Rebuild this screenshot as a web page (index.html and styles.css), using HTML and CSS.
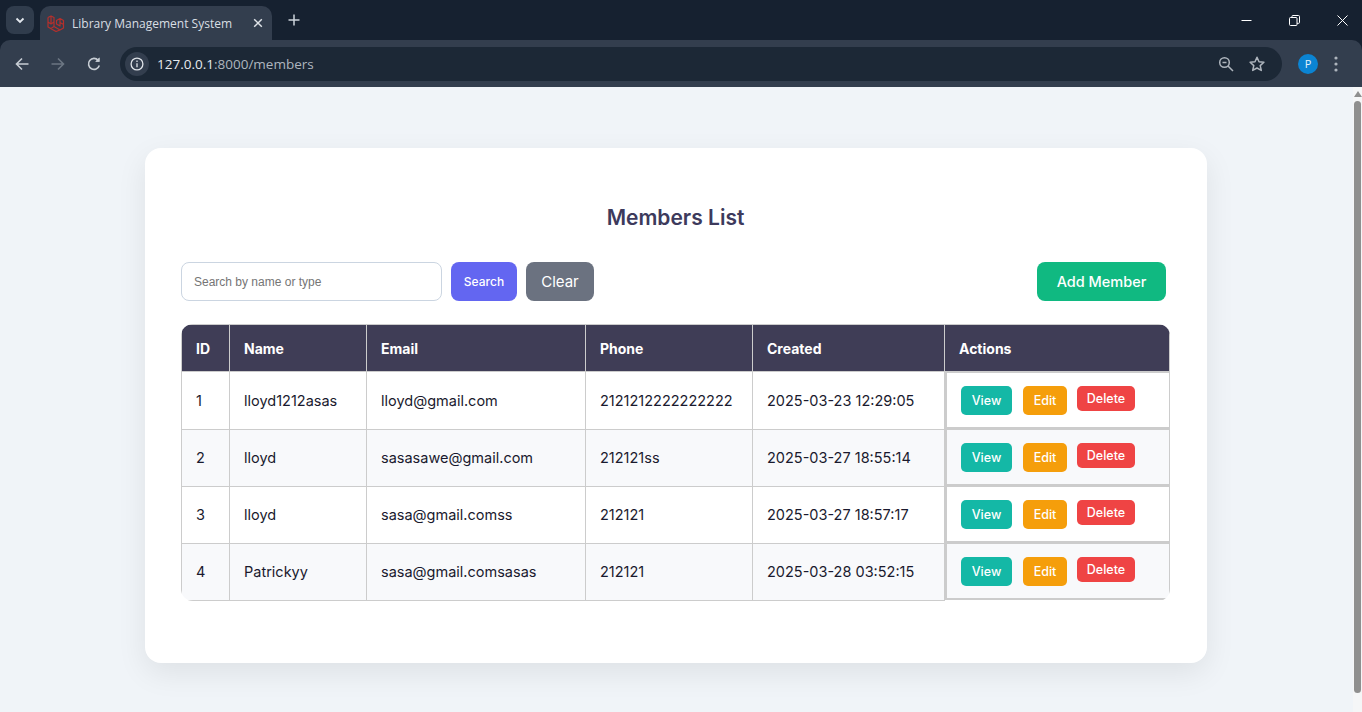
FILE: index.html
```html
<!DOCTYPE html>
<html lang="en">
<head>
<meta charset="utf-8">
<title>Library Management System</title>
<link rel="stylesheet" href="styles.css">
</head>
<body>
<header class="chrome">
  <div class="tabstrip">
    <button class="tabsearch"><svg width="12" height="12" viewBox="0 0 12 12"><path d="M2.5 4.5 6 8l3.500-3.500" fill="none" stroke="#e3e8ee" stroke-width="1.800"/></svg></button>
    <div class="tab">
      <svg class="favicon" width="18" height="18" viewBox="0 0 18 18" fill="none" stroke="#b5302c" stroke-width="1.200" stroke-linejoin="round"><path d="M1 3.500 4 2l3 1.500v9l6 3.500 3.500-2v-3.500L13 8.500v3.500l-3.500-2V6.500L13 4.500l3.500 2v3.500M7 8l-3 2-3-2V3.500M4 2v8M1 8v5l8 4.500 4-1.500M7 12.500 4 14.500 1 13M13 4.500v4"/></svg>
      <span class="tabtitle">Library Management System</span>
      <svg class="tabclose" width="10" height="10" viewBox="0 0 10 10"><path d="M1.200 1.200l7.600 7.600M8.800 1.200 1.200 8.800" stroke="#dfe3e8" stroke-width="1.500"/></svg>
    </div>
    <svg class="newtab" width="12" height="12" viewBox="0 0 12 12"><path d="M6 .500v11M.5 6h11" stroke="#cdd3da" stroke-width="1.500"/></svg>
    <div class="winctl">
      <svg width="11" height="11" viewBox="0 0 11 11"><path d="M.5 5.500h10" stroke="#fff"/></svg>
      <svg width="11" height="11" viewBox="0 0 11 11" fill="none" stroke="#fff"><rect x=".5" y="2.500" width="7.500" height="8" rx="1"/><path d="M3 2.500V1.300q0-.8.8-.8h5.700q1 0 1 1v6q0 .8-.8.8H8"/></svg>
      <svg width="11" height="11" viewBox="0 0 11 11"><path d="M.5.500l10 10M10.500.500l-10 10" stroke="#fff"/></svg>
    </div>
  </div>
  <div class="toolbar">
    <svg class="navicon" width="16" height="16" viewBox="0 0 16 16" fill="none" stroke="#c7cdd4" stroke-width="1.600"><path d="M14.500 8H2.500M8 2.500 2.500 8 8 13.500"/></svg>
    <svg class="navicon" width="16" height="16" viewBox="0 0 16 16" fill="none" stroke="#6c7683" stroke-width="1.600"><path d="M1.500 8h12M8 2.500 13.500 8 8 13.500"/></svg>
    <svg class="navicon" width="16" height="16" viewBox="0 0 16 16" fill="none" stroke="#c7cdd4" stroke-width="1.600"><path d="M13.300 9.500A5.500 5.500 0 1 1 12.200 4.300"/><path d="M13.500 1.500v4.200H9.300" fill="#c7cdd4" stroke="none"/><path d="M13.500 1.500v4.200H9.300z" fill="#c7cdd4" stroke-width="0"/></svg>
    <div class="omnibox">
      <span class="siteinfo"><svg width="14" height="14" viewBox="0 0 14 14" fill="none" stroke="#dfe3e8" stroke-width="1.300"><circle cx="7" cy="7" r="5.900"/><path d="M7 6.200v4M7 3.500v1.400"/></svg></span>
      <span class="url"><span class="host">127.0.0.1</span>:8000/members</span>
      <svg class="omniicon" width="16" height="16" viewBox="0 0 16 16" fill="none" stroke="#aeb5bd" stroke-width="1.500"><circle cx="6.500" cy="6.500" r="4.800"/><path d="M10 10l5 5M4.500 6.500h4"/></svg>
      <svg class="omniicon" width="18" height="18" viewBox="0 0 18 18" fill="none" stroke="#aeb5bd" stroke-width="1.500" stroke-linejoin="round"><path d="M9 2.300l2 4.500 4.900.5-3.700 3.300 1.100 4.800L9 13l-4.300 2.400 1.100-4.800L2.100 7.300 7 6.800z"/></svg>
    </div>
    <span class="avatar">P</span>
    <svg class="menu" width="4" height="16" viewBox="0 0 4 16" fill="#aeb5bd"><circle cx="2" cy="2" r="1.600"/><circle cx="2" cy="8" r="1.600"/><circle cx="2" cy="14" r="1.600"/></svg>
  </div>
</header>
<div class="viewport">
  <main class="page">
    <section class="card">
      <h1 class="title">Members List</h1>
      <div class="controls">
        <form class="searchform">
          <input class="searchinput" type="text" placeholder="Search by name or type">
          <button class="btn btn-search" type="button">Search</button>
          <button class="btn btn-clear" type="button">Clear</button>
        </form>
        <button class="btn btn-add" type="button">Add Member</button>
      </div>
      <div class="tablewrap">
        <table class="members">
          <thead>
            <tr><th class="c1">ID</th><th class="c2">Name</th><th class="c3">Email</th><th class="c4">Phone</th><th class="c5">Created</th><th class="c6">Actions</th></tr>
          </thead>
          <tbody>
            <tr><td>1</td><td>lloyd1212asas</td><td>lloyd@gmail.com</td><td>2121212222222222</td><td>2025-03-23 12:29:05</td><td class="actions"><div class="actionbox"><a class="act act-view">View</a><a class="act act-edit">Edit</a><a class="act act-del">Delete</a></div></td></tr>
            <tr><td>2</td><td>lloyd</td><td>sasasawe@gmail.com</td><td>212121ss</td><td>2025-03-27 18:55:14</td><td class="actions"><div class="actionbox"><a class="act act-view">View</a><a class="act act-edit">Edit</a><a class="act act-del">Delete</a></div></td></tr>
            <tr><td>3</td><td>lloyd</td><td>sasa@gmail.comss</td><td>212121</td><td>2025-03-27 18:57:17</td><td class="actions"><div class="actionbox"><a class="act act-view">View</a><a class="act act-edit">Edit</a><a class="act act-del">Delete</a></div></td></tr>
            <tr><td>4</td><td>Patrickyy</td><td>sasa@gmail.comsasas</td><td>212121</td><td>2025-03-28 03:52:15</td><td class="actions"><div class="actionbox"><a class="act act-view">View</a><a class="act act-edit">Edit</a><a class="act act-del">Delete</a></div></td></tr>
          </tbody>
        </table>
      </div>
    </section>
  </main>
  <div class="scrollbar">
    <span class="arrow"></span>
    <span class="thumb"></span>
  </div>
</div>
</body>
</html>
```
FILE: styles.css
```css
* { box-sizing: border-box; }
html, body { margin: 0; height: 100%; overflow: hidden; }
body { display: flex; flex-direction: column; font-family: "Inter", "Open Sans", sans-serif; background: #f0f4f8; color: #111827; }

.chrome { flex: none; height: 87px; background: #162130; font-family: "Open Sans", "Liberation Sans", sans-serif; }
.tabstrip { height: 40px; display: flex; align-items: flex-start; padding: 6px 0 0 6px; }
.tabsearch { width: 28px; height: 28px; border: 0; padding: 0; border-radius: 8px; background: #303c4c; display: flex; align-items: center; justify-content: center; }
.tab { width: 232px; height: 34px; margin-left: 6px; background: #333e4e; border-radius: 10px 10px 0 0; display: flex; align-items: center; padding: 0 9px 0 7px; }
.favicon { flex: none; }
.tabtitle { margin-left: 7px; flex: 1; font-size: 12px; color: #d9dee4; white-space: nowrap; }
.newtab { margin: 8px 0 0 16px; }
.winctl { margin-left: auto; display: flex; gap: 37px; padding: 9px 14px 0 0; }
.toolbar { height: 47px; background: #333e4e; border-radius: 10px 10px 0 0; display: flex; align-items: center; padding: 0 0 0 14px; }
.navicon { margin-right: 20px; flex: none; }
.navicon:nth-child(3) { margin-right: 18px; }
.omnibox { width: 1162px; height: 34px; border-radius: 17px; background: #1c2836; display: flex; align-items: center; padding: 0 16px 0 5px; }
.siteinfo { width: 24px; height: 24px; border-radius: 50%; background: #333e4e; display: flex; align-items: center; justify-content: center; flex: none; }
.url { margin-left: 8px; flex: 1; font-size: 13.500px; color: #aeb6bf; }
.host { color: #e6eaee; }
.omniicon { margin-left: 14px; flex: none; }
.avatar { margin-left: 16px; width: 20px; height: 20px; border-radius: 50%; background: #0b84d3; color: #e6f2fb; font-size: 11px; display: flex; align-items: center; justify-content: center; flex: none; }
.menu { margin-left: 16px; flex: none; }

.viewport { flex: 1; min-height: 0; display: flex; }
.page { flex: 1; min-width: 0; padding: 61px 146px 0 145px; }
.scrollbar { flex: none; width: 9px; background: #f5f6f7; display: flex; flex-direction: column; align-items: center; padding-top: 4px; gap: 4px; }
.arrow { width: 0; height: 0; border-left: 4px solid transparent; border-right: 4px solid transparent; border-bottom: 6px solid #8f8f8f; }
.thumb { width: 7px; height: 592px; border-radius: 4px; background: #8f8f8f; }

.card { height: 515px; background: #fff; border-radius: 16px; box-shadow: 0 10px 30px rgba(0, 0, 0, .08); padding: 56px 37px 0 36px; }
.title { margin: 0; height: 28px; line-height: 28px; text-align: center; font-size: 21px; font-weight: 600; color: #3d3a5c; }
.controls { margin-top: 30px; display: flex; justify-content: space-between; padding-right: 4px; }
.searchform { display: flex; gap: 9px; margin: 0; }
.searchinput { width: 261px; height: 39px; border: 1px solid #cbd5e1; border-radius: 8px; padding: 0 12px; font-family: "Liberation Sans", Arial, sans-serif; font-size: 12px; background: #fff; }
.searchinput::placeholder { color: #757575; opacity: 1; }
.btn { height: 39px; border: 0; border-radius: 8px; color: #fff; font-family: "Inter", sans-serif; padding: 0; }
.btn-search { width: 66px; background: #6366f1; font-size: 12px; font-weight: 500; }
.btn-clear { width: 68px; background: #6b7280; font-size: 15px; }
.btn-add { width: 129px; background: #10b981; font-size: 14.500px; font-weight: 500; }

.tablewrap { margin-top: 23px; border-radius: 12px; overflow: hidden; }
.members { width: 989px; table-layout: fixed; border-collapse: collapse; font-size: 14.500px; }
.c1 { width: 48px; } .c2 { width: 137px; } .c3 { width: 219px; } .c4 { width: 167px; } .c5 { width: 192px; }
.members th, .members td { border: 1px solid #cccccc; padding: 0 14px; text-align: left; white-space: nowrap; }
.members th { height: 47px; background: #3f3d56; color: #fff; font-size: 14px; font-weight: 700; }
.members td { height: 57px; color: #1a1a2e; }
.members tbody tr:nth-child(even) { background: #f8f9fb; }
.members td.actions { padding: 0; border: 0; }
.actionbox { height: 57px; border: 1px solid #cccccc; border-left-width: 2px; border-bottom-width: 2px; display: flex; align-items: flex-start; padding: 13px 0 0 14px; }
.act { margin-right: 11px; height: 29px; border-radius: 5px; color: #fff; font-size: 12.500px; font-weight: 500; display: flex; align-items: center; justify-content: center; }
.act-view { width: 51px; background: #14b8a6; }
.act-edit { width: 44px; background: #f59e0b; margin-right: 10px; }
.act-del { width: 58px; height: 25px; background: #ef4444; }
```
